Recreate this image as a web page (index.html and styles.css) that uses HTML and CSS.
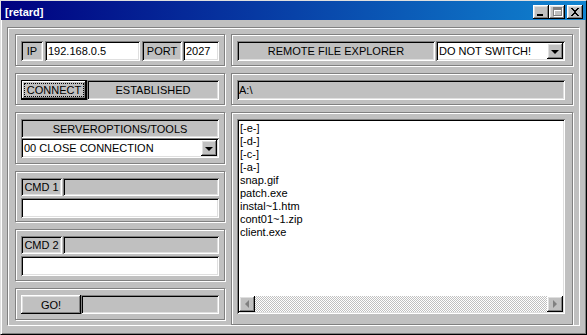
FILE: index.html
```html
<!DOCTYPE html>
<html lang="en">
<head>
  <meta charset="UTF-8" />
  <title>[retard]</title>
  <link rel="stylesheet" href="styles.css">
</head>
<body>

  <div class="window">
    <div class="titlebar">
      <span class="title">[retard]</span>
      <div class="controls">
        <span class="ctl bevel">
          <svg width="12" height="12" viewBox="0 0 12 12" shape-rendering="crispEdges"><rect x="2" y="8" width="6" height="2" fill="#000"/></svg>
        </span>
        <span class="ctl bevel">
          <svg width="12" height="12" viewBox="0 0 12 12" shape-rendering="crispEdges">
            <path d="M3 2h9v9h-9z M4 5v5h7v-5z" fill="#fff" fill-rule="evenodd"/>
            <path d="M2 1h9v9h-9z M3 4v5h7v-5z" fill="#808080" fill-rule="evenodd"/>
          </svg>
        </span>
        <span class="ctl bevel close">
          <svg width="12" height="12" viewBox="0 0 12 12" shape-rendering="crispEdges">
            <path d="M2 2h2v1h1v1h2v-1h1v-1h2v1h-1v1h-1v1h-1v2h1v1h1v1h1v1h-2v-1h-1v-1h-2v1h-1v1h-2v-1h1v-1h1v-1h1v-2h-1v-1h-1v-1h-1z" fill="#000"/>
          </svg>
        </span>
      </div>
    </div>

    <div class="client">
      <div class="panel">

        <!-- left column -->
        <div class="col">
          <div class="group h32">
            <div class="row">
              <div class="sunken label w-ip">IP</div>
              <div class="sunken edit w-ipedit">192.168.0.5</div>
              <div class="sunken label w-port">PORT</div>
              <div class="sunken edit w-portedit">2027</div>
            </div>
          </div>

          <div class="group h32">
            <div class="row tight">
              <div class="button default w-connect"><span class="focus">CONNECT</span></div>
              <div class="sunken label grow">ESTABLISHED</div>
            </div>
          </div>

          <div class="group h52">
            <div class="sunken label full h19">SERVEROPTIONS/TOOLS</div>
            <div class="sunken edit combo">
              <span class="combo-text">00 CLOSE CONNECTION</span>
              <span class="drop bevel"><i class="arrow"></i></span>
            </div>
          </div>

          <div class="group h51">
            <div class="row cmd">
              <div class="sunken label w-cmd">CMD 1</div>
              <div class="sunken label grow"></div>
            </div>
            <div class="sunken edit full cmd-edit"></div>
          </div>

          <div class="group h52">
            <div class="row cmd">
              <div class="sunken label w-cmd">CMD 2</div>
              <div class="sunken label grow"></div>
            </div>
            <div class="sunken edit full cmd-edit"></div>
          </div>

          <div class="group h32">
            <div class="row tight go-row">
              <div class="button bevel w-go">GO!</div>
              <div class="sunken label grow"></div>
            </div>
          </div>
        </div>

        <!-- right column -->
        <div class="col right">
          <div class="group h32">
            <div class="row tight">
              <div class="sunken label w-explorer">REMOTE FILE EXPLORER</div>
              <div class="sunken edit combo grow">
                <span class="combo-text">DO NOT SWITCH!</span>
                <span class="drop bevel"><i class="arrow"></i></span>
              </div>
            </div>
          </div>

          <div class="group h32">
            <div class="sunken path">A:\</div>
          </div>

          <div class="group fill">
            <div class="sunken listbox">
              <div class="items">
                <div>[-e-]</div>
                <div>[-d-]</div>
                <div>[-c-]</div>
                <div>[-a-]</div>
                <div>snap.gif</div>
                <div>patch.exe</div>
                <div>instal~1.htm</div>
                <div>cont01~1.zip</div>
                <div>client.exe</div>
              </div>
              <div class="hscroll">
                <span class="sbtn bevel"><i class="tri left"></i></span>
                <span class="track"></span>
                <span class="sbtn bevel"><i class="tri right"></i></span>
              </div>
            </div>
          </div>
        </div>

      </div>
    </div>
  </div>

</body>
</html>
```

FILE: styles.css
```css
* {
  box-sizing: border-box;
}

body {
  margin: 0;
  background: #c0c0c0;
  font-family: 'Liberation Sans', Arial, sans-serif;
  font-size: 11px;
  color: #000;
}

.window {
  width: 587px;
  height: 335px;
  background: #c0c0c0;
  padding: 0 0 2px 0;
  border-top: 1px solid #dfdfdf;
  border-left: 1px solid #dfdfdf;
  border-right: 1px solid #000;
  border-bottom: 1px solid #000;
  box-shadow: inset 1px 1px #fff, inset -1px -1px #808080;
  display: flex;
  flex-direction: column;
}

.titlebar {
  height: 19px;
  background: linear-gradient(to right, #000080, #1084d0);
  display: flex;
  align-items: center;
  justify-content: space-between;
  padding: 3px 3px 0 4px;
}

.title {
  color: #fff;
  font-weight: bold;
  font-size: 11px;
}

.controls {
  display: flex;
}

.ctl {
  width: 16px;
  height: 14px;
  display: flex;
  align-items: center;
  justify-content: center;
}

.ctl.close {
  margin-left: 2px;
}

.bevel {
  background: #c0c0c0;
  box-shadow: inset -1px -1px #000, inset 1px 1px #fff, inset -2px -2px #808080, inset 2px 2px #dfdfdf;
}

.sunken {
  box-shadow: inset 1px 1px #808080, inset -1px -1px #fff, inset 2px 2px #000, inset -2px -2px #dfdfdf;
}

.client {
  flex: 1;
  padding: 8px 0 0 7px;
}

.panel {
  width: 572px;
  height: 298px;
  border: 1px solid #fff;
  box-shadow: -1px -1px #808080;
  padding: 5px 6px 0 6px;
  display: flex;
  gap: 6px;
}

.col {
  width: 210px;
  display: flex;
  flex-direction: column;
  gap: 7px;
}

.col.right {
  width: 343px;
}

.group {
  border: 1px solid #808080;
  box-shadow: inset 1px 1px #fff, 1px 1px #fff;
  padding: 6px 5px 0 5px;
}

.col.right .group {
  padding-right: 7px;
}

.h32 { height: 32px; }
.h51 { height: 51px; }
.h52 { height: 52px; }
.fill { flex: 1; }

.row {
  display: flex;
  height: 20px;
  gap: 2px;
}

.row.tight {
  gap: 0;
}

.row.cmd {
  height: 18px;
  gap: 1px;
}

.go-row {
  height: 19px;
}

.label {
  background: #c0c0c0;
  display: flex;
  align-items: center;
  justify-content: center;
  height: 100%;
}

.edit {
  background: #fff;
  display: flex;
  align-items: center;
  padding-left: 3px;
  height: 100%;
}

.grow { flex: 1; }
.full { width: 100%; }
.h19 { height: 19px; }

.w-ip { width: 22px; }
.w-ipedit { width: 95px; }
.w-port { width: 40px; }
.w-portedit { width: 36px; margin-left: -1px; }
.w-connect { width: 66px; }
.w-cmd { width: 41px; }
.w-go { width: 60px; }
.w-explorer { width: 198px; margin-right: 1px; }

.button {
  display: flex;
  align-items: center;
  justify-content: center;
  height: 100%;
}

.button.default {
  background: #c0c0c0;
  border: 1px solid #000;
  box-shadow: inset -1px -1px #000, inset 1px 1px #fff, inset -2px -2px #808080;
  padding: 2px 2px;
}

.focus {
  flex: 1;
  height: 100%;
  border: 1px dotted #000;
  display: flex;
  align-items: center;
  justify-content: center;
}

.combo {
  height: 20px;
  padding: 2px 2px 2px 3px;
  justify-content: space-between;
}

.combo-text {
  flex: 1;
}

.drop {
  width: 16px;
  height: 16px;
  display: flex;
  align-items: center;
  justify-content: center;
}

.arrow {
  width: 0;
  height: 0;
  border-left: 4px solid transparent;
  border-right: 4px solid transparent;
  border-top: 4px solid #000;
  margin-top: 1px;
}

.cmd-edit {
  height: 20px;
  margin-top: 2px;
}

.path {
  height: 20px;
  background: #c0c0c0;
  display: flex;
  align-items: center;
  padding-left: 2px;
}

.listbox {
  background: #fff;
  height: 195px;
  padding: 2px;
  display: flex;
  flex-direction: column;
}

.items {
  flex: 1;
  padding: 1px 0 0 1px;
  line-height: 13px;
}

.hscroll {
  height: 16px;
  display: flex;
}

.sbtn {
  width: 16px;
  height: 16px;
  display: flex;
  align-items: center;
  justify-content: center;
}

.track {
  flex: 1;
  background: repeating-conic-gradient(#c0c0c0 0 25%, #fff 0 50%) 0 0 / 2px 2px;
}

.tri {
  width: 0;
  height: 0;
  border-top: 4px solid transparent;
  border-bottom: 4px solid transparent;
}

.tri.left {
  border-right: 4px solid #808080;
}

.tri.right {
  border-left: 4px solid #808080;
}
```
